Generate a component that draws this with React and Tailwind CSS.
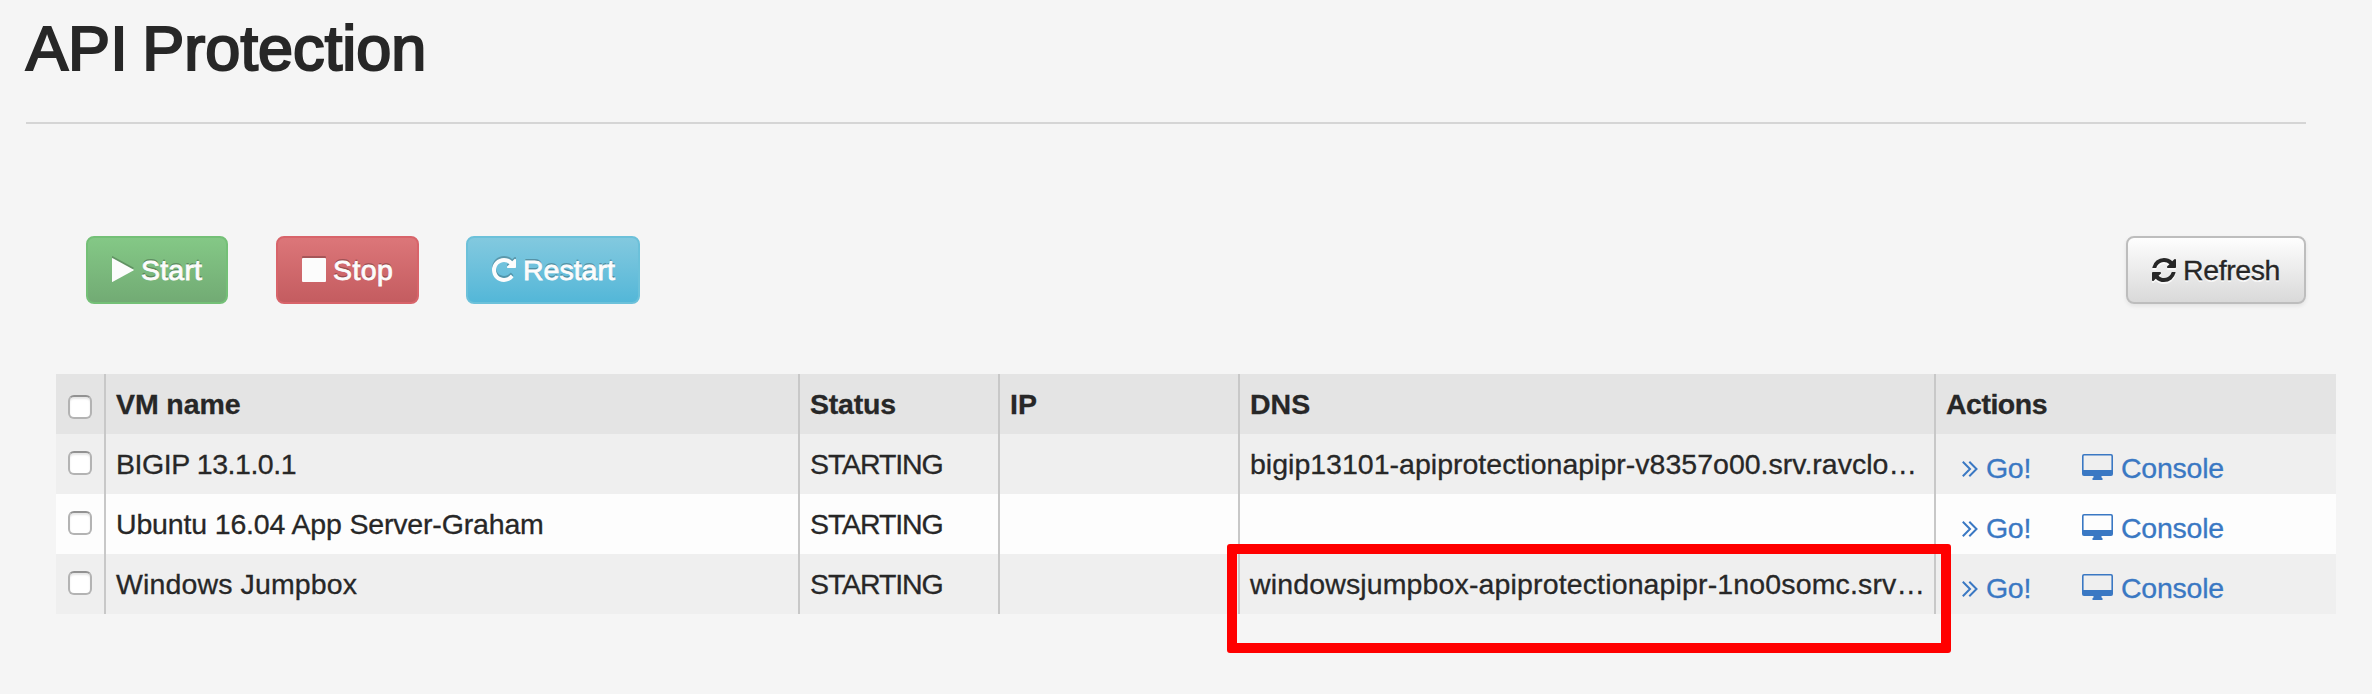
const REPEAT =
  "M1536 256v448q0 26-19 45t-45 19h-448q-42 0-59-40-17-39 14-69l138-138q-148-137-349-137-104 0-198.5 40.5t-163.5 109.5-109.5 163.5-40.5 198.5 40.5 198.5 109.5 163.5 163.5 109.5 198.5 40.5q119 0 225-52t179-147q7-10 23-12 15 0 25 9l137 138q9 8 9.5 20.5t-7.5 22.5q-109 132-264 204.5t-327 72.5q-156 0-298-61t-245-164-164-245-61-298 61-298 164-245 245-164 298-61q147 0 284.5 55.5t244.5 156.5l130-129q29-31 70-14 39 17 39 59z";
const REFRESH =
  "M1511 1056q0 5-1 7-64 268-268 434.5t-478 166.5q-146 0-282.5-55t-243.5-157l-129 129q-19 19-45 19t-45-19-19-45v-448q0-26 19-45t45-19h448q26 0 45 19t19 45-19 45l-137 137q71 66 161 102t187 36q134 0 250-65t186-179q11-17 53-117 8-23 30-23h192q13 0 22.5 9.5t9.5 22.5zm25-800v448q0 26-19 45t-45 19h-448q-26 0-45-19t-19-45 19-45l138-138q-148-137-349-137-134 0-250 65t-186 179q-11 17-53 117-8 23-30 23h-199q-13 0-22.5-9.5t-9.5-22.5v-7q65-268 270-434.5t480-166.5q146 0 284 55.5t245 156.5l130-129q19-19 45-19t45 19 19 45z";

const darkDrop = "shrink-0 drop-shadow-[0_-2px_0_rgba(0,0,0,0.22)]";

const PlayIcon = () => (
  <svg className={darkDrop} width="22" height="24" viewBox="0 0 22 24" fill="#fcfcfc"><path d="M0 .6Q0-.2.8.2L21.4 11.5q.8.5 0 1L.8 23.8Q0 24.2 0 23.4Z" /></svg>
);
const StopIcon = () => (
  <svg className={darkDrop} width="24" height="24" viewBox="0 0 24 24" fill="#fcfcfc"><rect width="24" height="24" rx="1" /></svg>
);
const RepeatIcon = () => (
  <svg className={darkDrop} width="24" height="24" viewBox="0 128 1536 1536" fill="#fcfcfc"><path d={REPEAT} /></svg>
);
const RefreshIcon = () => (
  <svg className="shrink-0 drop-shadow-[0_2px_0_rgba(255,255,255,0.75)]" width="24" height="24" viewBox="0 128 1536 1536" fill="#272727"><path d={REFRESH} /></svg>
);
const ChevronsIcon = () => (
  <svg className="mt-0.5 shrink-0" width="16" height="16" viewBox="0 0 16 16" fill="none" stroke="#3a78c3" strokeWidth="2"><path d="M.8.8 8 8 .8 15.2M7.3.8 14.5 8l-7.2 7.2" /></svg>
);
const MonitorIcon = () => (
  <svg className="-mt-0.5 shrink-0" width="31" height="26" viewBox="0 0 31 26" fill="#3a78c3">
    <path d="M2 0h27a2 2 0 0 1 2 2v15h-1.6V2.2a.6.6 0 0 0-.6-.6H2.2a.6.6 0 0 0-.6.6V17H0V2a2 2 0 0 1 2-2Z" />
    <path d="M0 16h31v4a2 2 0 0 1-2 2H2a2 2 0 0 1-2-2Z" />
    <path d="M11.5 22h8v1.5l1 .8V26h-10v-1.7l1-.8Z" />
  </svg>
);

const Button = ({ icon, label, className, labelClass }) => (
  <button className={`flex h-[68px] items-center rounded-lg border-2 pl-6 text-[28.5px] leading-[40px] ${className}`}>
    {icon}
    <span className={`whitespace-nowrap ${labelClass}`}>{label}</span>
  </button>
);

const Checkbox = () => (
  <span role="checkbox" aria-checked="false" className="block size-6 rounded-[6px] border-2 border-[#b3b3b3] border-t-[#929292] bg-white shadow-[inset_0_2px_2px_rgba(0,0,0,0.1)]" />
);

const rows = [
  { name: "BIGIP 13.1.0.1", nameClass: "tracking-[-0.45px]", dns: "bigip13101-apiprotectionapipr-v8357o00.srv.ravclo…", dnsClass: "tracking-[0.01px]", bg: "bg-[#efefef]" },
  { name: "Ubuntu 16.04 App Server-Graham", nameClass: "tracking-[-0.16px]", dns: "", dnsClass: "", bg: "bg-[#fdfdfd]" },
  { name: "Windows Jumpbox", nameClass: "tracking-[0.13px]", dns: "windowsjumpbox-apiprotectionapipr-1no0somc.srv…", dnsClass: "tracking-[0.14px]", bg: "bg-[#efefef]" },
];

const grid = "grid h-[60px] grid-cols-[50px_694px_200px_240px_696px_400px]";
const cell = "overflow-hidden whitespace-nowrap border-r-2 border-[#c8c8c8] pl-[10px] pt-[10px]";

export default function App() {
  return (
    <main className="h-[694px] w-[2372px] overflow-hidden bg-[#f5f5f5] pl-[26px] font-['Liberation_Sans',Arial,sans-serif] text-[28.5px] leading-[40px] text-[#272727] [-webkit-text-stroke:0.3px]">
      <h1 className="h-[122px] whitespace-nowrap pt-[8px] text-[63px] leading-[80px] tracking-[0.05px] [word-spacing:-3px] [-webkit-text-stroke:2.2px_#272727]">
        <span>API Protection</span>
      </h1>
      <hr className="h-0.5 w-[2280px] border-0 bg-[#d5d5d5]" />
      <div className="mt-28 flex w-[2280px] pl-[60px]">
        <Button icon={<PlayIcon />} label="Start" labelClass="ml-[7px] tracking-[0.2px]" className="mr-12 w-[142px] border-[#74c077] bg-linear-to-b from-[#84c886] to-[#72ab74] text-[#fcfcfc] [-webkit-text-stroke:0.8px] [text-shadow:0_-2px_0_rgba(0,0,0,0.25)]" />
        <Button icon={<StopIcon />} label="Stop" labelClass="ml-[7px] tracking-[0.4px]" className="mr-[47px] w-[143px] border-[#d8646a] bg-linear-to-b from-[#dc7679] to-[#c45c60] text-[#fcfcfc] [-webkit-text-stroke:0.8px] [text-shadow:0_-2px_0_rgba(0,0,0,0.25)]" />
        <Button icon={<RepeatIcon />} label="Restart" labelClass="ml-[7px]" className="w-[174px] border-[#6cc1da] bg-linear-to-b from-[#82c9df] to-[#53b7d8] text-[#fcfcfc] [-webkit-text-stroke:0.8px] [text-shadow:0_-2px_0_rgba(0,0,0,0.25)]" />
        <Button icon={<RefreshIcon />} label="Refresh" labelClass="ml-[7px] tracking-[-0.4px]" className="ml-auto w-[180px] border-[#bdbdbd] bg-linear-to-b from-white to-[#d8d8d8] bg-origin-border shadow-[0_2px_4px_rgba(0,0,0,0.08)] [text-shadow:0_2px_0_rgba(255,255,255,0.75)]" />
      </div>
      <div className="relative ml-[30px] mt-[70px] w-[2280px]">
        <div className={`${grid} bg-[#e4e4e4] font-bold`}>
          <div className="border-r-2 border-[#c8c8c8] pl-3 pt-[21px]"><Checkbox /></div>
          <div className={cell}><span className="tracking-[-0.1px]">VM name</span></div>
          <div className={cell}><span className="tracking-[-0.2px]">Status</span></div>
          <div className={cell}><span>IP</span></div>
          <div className={cell}><span>DNS</span></div>
          <div className="pl-[10px] pt-[10px]"><span className="tracking-[-0.5px]">Actions</span></div>
        </div>
        {rows.map((r) => (
          <div key={r.name} className={`${grid} ${r.bg}`}>
            <div className="border-r-2 border-[#c8c8c8] pl-3 pt-[17px]"><Checkbox /></div>
            <div className={cell}><span className={r.nameClass}>{r.name}</span></div>
            <div className={cell}><span className="tracking-[-1.1px]">STARTING</span></div>
            <div className={cell} />
            <div className={cell}><span className={r.dnsClass}>{r.dns}</span></div>
            <div className="flex items-center pl-[26px] pt-[8px] text-[#3a78c3]">
              <ChevronsIcon />
              <span className="ml-2 w-[96px] tracking-[-0.3px]">Go!</span>
              <MonitorIcon />
              <span className="ml-2 tracking-[-0.25px]">Console</span>
            </div>
          </div>
        ))}
        <div className="absolute left-[1171px] top-[170px] h-[109px] w-[724px] rounded-[3px] border-[10px] border-[#ff0000]" />
      </div>
    </main>
  );
}
